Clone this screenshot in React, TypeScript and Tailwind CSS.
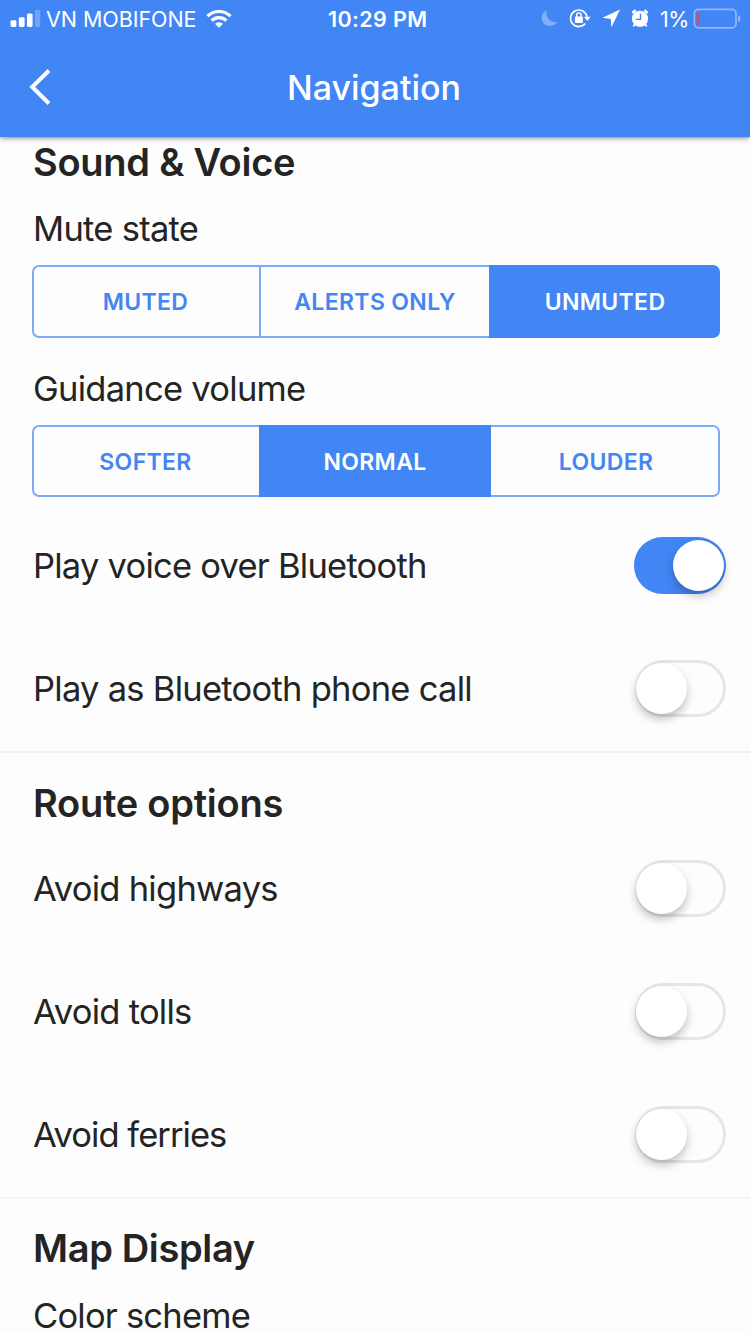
import React from "react";

function Signal() {
  return (
    <svg width="32" height="20" viewBox="0 0 32 20" fill="white">
      <rect x="0.6" y="11.2" width="5.8" height="6.8" rx="1.4" />
      <rect x="8.8" y="8.2" width="5.8" height="9.8" rx="1.4" />
      <rect x="17" y="4.6" width="5.6" height="13.4" rx="1.4" />
      <rect x="25" y="1" width="5.2" height="17" rx="1.2" opacity="0.25" />
    </svg>
  );
}

function Wifi() {
  return (
    <svg width="26" height="20" viewBox="0 0 26 20" fill="none" stroke="white" strokeWidth="3.2">
      <path d="M1.4 7.2C8 0.9 18 0.9 24.6 7.2" />
      <path d="M5.6 11.5C9.8 7.6 16.2 7.6 20.4 11.5" />
      <path d="M13 18.8L9 14.8C11.3 12.7 14.7 12.7 17 14.8Z" fill="white" stroke="none" />
    </svg>
  );
}

function StatusIcons() {
  return (
    <svg width="112" height="24" viewBox="0 0 112 24" fill="none">
      <path d="M6.6 3.2C3 4.8 1.3 8 1.6 11.4C2.1 16 6 19 10 18.8C13.4 18.7 16.2 17.4 17.4 14.8C10.8 16.4 5 10.5 6.6 3.2Z" fill="white" opacity="0.35" />
      <path d="M45.2 16.6A8.3 8.3 0 1 1 47 9.9" stroke="white" strokeWidth="1.6" />
      <path d="M43.9 9.8H50.6L47.3 14Z" fill="white" />
      <rect x="34.9" y="9.6" width="8" height="6.4" rx="0.8" fill="white" />
      <path d="M36.6 10V8.2a2.3 2.3 0 0 1 4.6 0v1.8" stroke="white" strokeWidth="1.4" />
      <path d="M80 2.6L62.4 10.8L70.8 12L71.4 20.4Z" fill="white" />
      <circle cx="100" cy="11.8" r="8.1" fill="white" />
      <path d="M92.3 6L95.6 3.2M107.7 6L104.4 3.2" stroke="white" strokeWidth="2.4" />
      <path d="M95 17.4L93.2 19.2M105 17.4L106.8 19.2" stroke="white" strokeWidth="2" />
      <path d="M100.5 6.8V12.4H96" stroke="#4285f4" strokeWidth="1.4" />
    </svg>
  );
}

function Battery() {
  return (
    <svg width="50" height="22" viewBox="0 0 50 22" fill="none">
      <rect x="1.4" y="1.4" width="41.6" height="18.4" rx="4" stroke="white" strokeOpacity="0.42" strokeWidth="1.7" />
      <rect x="3.6" y="4.2" width="2.9" height="12.6" rx="1" fill="#c4517c" />
      <path d="M45 7.3C48.2 8.2 48.2 13.2 45 14.1Z" fill="white" opacity="0.42" />
    </svg>
  );
}

function Heading({ children, className }: { children: React.ReactNode; className: string }) {
  return (
    <h2 className={`flex h-[50px] items-center whitespace-nowrap pl-[33px] text-[38px] font-semibold ${className}`}>
      {children}
    </h2>
  );
}

function Label({ children, className }: { children: React.ReactNode; className: string }) {
  return <span className={`whitespace-nowrap text-[34.5px] ${className}`}>{children}</span>;
}

function Segments({ items, active, className }: { items: string[]; active: number; className: string }) {
  const last = items.length - 1;
  return (
    <div className={`ml-[32px] grid w-[688px] text-[23px] font-semibold tracking-[0.35px] ${className}`}>
      {items.map((item, i) => (
        <button
          key={item}
          className={
            "flex items-center justify-center border-y-2 pt-[2px] " +
            (i === 0 ? "rounded-l-[7px] border-l-2 pr-[2px] " : "") +
            (i === last ? "rounded-r-[7px] border-r-2 pl-[3px] " : "") +
            (i > 0 && i !== active && i - 1 !== active ? "border-l-2 " : "") +
            (i === active ? "border-[#4285f4] bg-[#4285f4] text-white" : "border-[#7dabf8] text-[#4285f4]")
          }
        >
          {item}
        </button>
      ))}
    </div>
  );
}

function Toggle({ on = false }: { on?: boolean }) {
  return (
    <span
      className={
        "flex h-[57px] items-center rounded-full " +
        (on ? "w-[92px] justify-end bg-[#4285f4] pr-[2px]" : "w-[91px] border-[3px] border-[#e6e6e6]")
      }
    >
      <span
        className={
          "size-[51px] rounded-full bg-white shadow-[0_5px_10px_rgba(0,0,0,0.24)] " + (on ? "" : "-ml-[2px]")
        }
      />
    </span>
  );
}

function ToggleRow({ label, on, tracking = "tracking-[-0.73px]" }: { label: string; on?: boolean; tracking?: string }) {
  return (
    <div className="flex h-[123px] items-center justify-between pl-[33px] pr-[24px]">
      <Label className={`leading-[52px] ${tracking}`}>{label}</Label>
      <Toggle on={on} />
    </div>
  );
}

export default function App() {
  return (
    <div className="flex h-[1333px] w-[750px] flex-col overflow-hidden bg-[#fdfdfd] font-['Inter','Liberation_Sans',sans-serif] text-[#242424]">
      <header className="z-10 h-[137px] shrink-0 bg-[#4285f4] text-white shadow-[0_1px_5px_rgba(0,0,0,0.5)]">
        <div className="grid h-[38px] grid-cols-[328px_212px_210px] items-center whitespace-nowrap text-[21.5px]">
          <div className="flex items-center pl-[10px]">
            <Signal />
            <span className="ml-[4px] w-[150px] tracking-[-0.05px]">VN MOBIFONE</span>
            <span className="ml-[10px]"><Wifi /></span>
          </div>
          <span className="font-semibold tracking-[0.4px]">10:29 PM</span>
          <div className="flex items-center">
            <StatusIcons />
            <span className="ml-[8px] w-[28px] tracking-[-0.5px]">1%</span>
            <span className="ml-[5px]"><Battery /></span>
          </div>
        </div>
        <div className="grid h-[98px] grid-cols-[1fr_auto_1fr] items-center">
          <svg className="ml-[26px]" width="28" height="40" viewBox="0 0 28 40" fill="none" stroke="white" strokeWidth="4">
            <path d="M23 3.5L6.2 20L23 36.5" />
          </svg>
          <h1 className="pr-[2px] text-[34px] font-medium">Navigation</h1>
        </div>
      </header>
      <main className="flex shrink-0 flex-col">
        <section className="flex h-[616px] flex-col border-b-2 border-[#f0f0f0]">
          <Heading className="tracking-[-0.25px]">Sound &amp; Voice</Heading>
          <Label className="mt-[16px] pl-[33px] leading-[52px] tracking-[-0.73px]">Mute state</Label>
          <Segments
            className="mt-[10px] h-[73px] grid-cols-[227px_230px_231px]"
            items={["MUTED", "ALERTS ONLY", "UNMUTED"]}
            active={2}
          />
          <Label className="mt-[25px] pl-[33px] leading-[52px] tracking-[-0.73px]">Guidance volume</Label>
          <Segments
            className="mt-[10px] h-[72px] grid-cols-[227px_232px_229px]"
            items={["SOFTER", "NORMAL", "LOUDER"]}
            active={1}
          />
          <div className="mt-[7px]">
            <ToggleRow label="Play voice over Bluetooth" on tracking="tracking-[-0.76px]" />
            <ToggleRow label="Play as Bluetooth phone call" />
          </div>
        </section>
        <section className="flex h-[446px] flex-col border-b-2 border-[#f4f4f4] pt-[25px]">
          <Heading className="tracking-[-0.25px]">Route options</Heading>
          <div className="-mt-px">
            <ToggleRow label="Avoid highways" />
            <ToggleRow label="Avoid tolls" />
            <ToggleRow label="Avoid ferries" tracking="tracking-[-0.95px]" />
          </div>
        </section>
        <section className="flex flex-col pt-[24px]">
          <Heading className="tracking-[-0.35px]">Map Display</Heading>
          <Label className="mt-[26px] pl-[33px] leading-[34px] tracking-[-0.78px]">Color scheme</Label>
        </section>
      </main>
    </div>
  );
}
